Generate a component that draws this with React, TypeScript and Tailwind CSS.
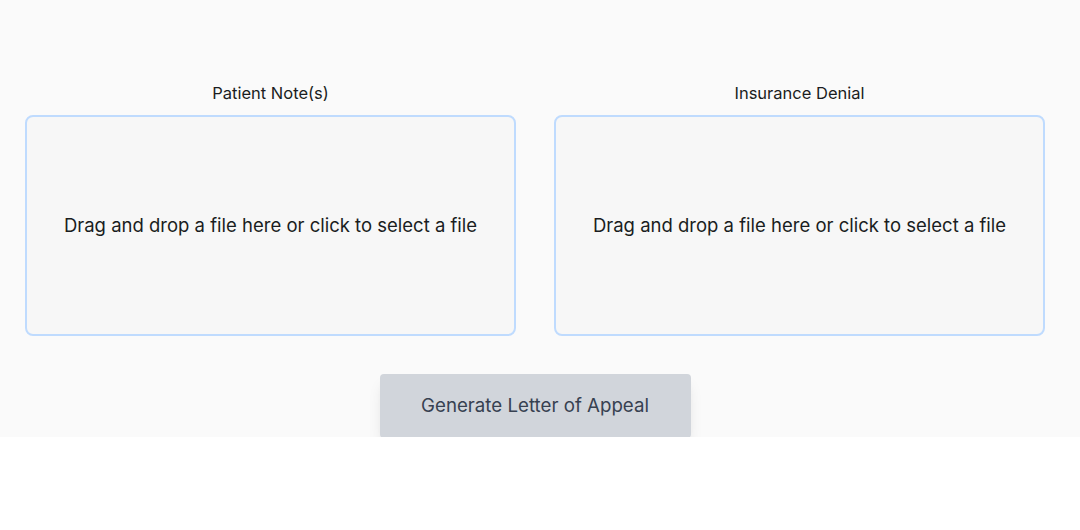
export default function App() {
  const zones = ["Patient Note(s)", "Insurance Denial"];

  return (
    <div
      className="w-full h-[530px] bg-white"
      style={{ fontFamily: "Inter, 'Noto Sans', sans-serif" }}
    >
      <div className="h-[437px] overflow-hidden bg-[#fafafa] pt-[83px] pl-[25px] pr-[35px]">
        <div className="grid grid-cols-2 gap-[38px]">
          {zones.map((label) => (
            <div key={label} className="flex flex-col items-center">
              <div className="text-[16.5px] leading-[20px] text-[#1a1d21] mb-[12px]">
                {label}
              </div>
              <div className="w-full h-[221px] rounded-lg border-2 border-[#bfdbfe] bg-[#f7f7f7] flex items-center justify-center cursor-pointer">
                <p className="text-[18.5px] text-[#1a1d21]">
                  Drag and drop a file here or click to select a file
                </p>
              </div>
            </div>
          ))}
        </div>
        <div className="flex justify-center mt-[38px]">
          <button className="w-[311px] h-[64px] rounded bg-[#d1d5db] text-[18.7px] text-[#374151] shadow-lg">
            Generate Letter of Appeal
          </button>
        </div>
      </div>
    </div>
  );
}
